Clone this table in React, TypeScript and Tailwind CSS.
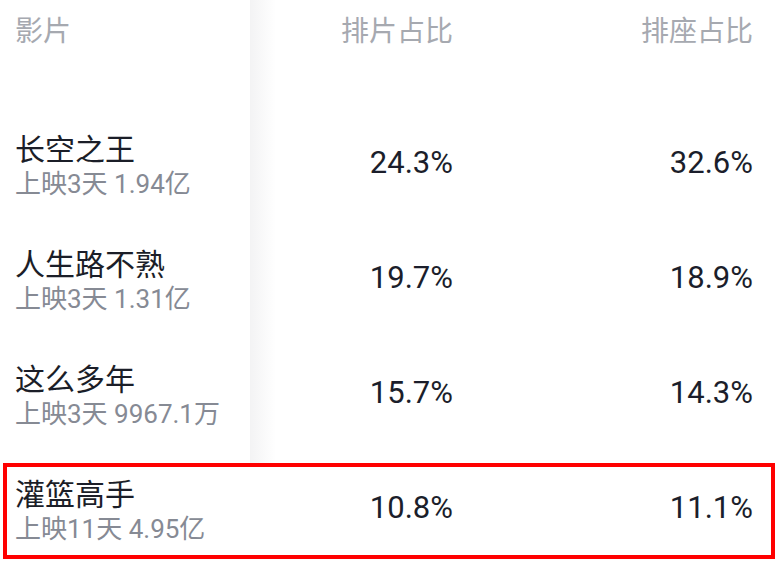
import React from "react";

interface FilmRow {
  name: string;
  info: string;
  pianRate: string;
  zuoRate: string;
  marked?: boolean;
}

const rows: FilmRow[] = [
  { name: "长空之王", info: "上映3天 1.94亿", pianRate: "24.3%", zuoRate: "32.6%" },
  { name: "人生路不熟", info: "上映3天 1.31亿", pianRate: "19.7%", zuoRate: "18.9%" },
  { name: "这么多年", info: "上映3天 9967.1万", pianRate: "15.7%", zuoRate: "14.3%" },
  { name: "灌篮高手", info: "上映11天 4.95亿", pianRate: "10.8%", zuoRate: "11.1%", marked: true },
];

// 左列固定时的阴影
const shade = "bg-[linear-gradient(to_right,#f3f3f4,#ffffff_26px)]";
const shadeTop =
  "bg-[linear-gradient(to_bottom,transparent_12px,#ffffff_12px),linear-gradient(to_right,#f3f3f4,#ffffff_26px)]";

export default function App() {
  return (
    <div
      className="w-[776px] h-[561px] overflow-hidden bg-white"
      style={{ fontFamily: "Roboto, 'Noto Sans CJK SC', sans-serif" }}
    >
      {/* 表头 */}
      <div className="flex h-[106px] text-[28px] leading-[34px] text-[#a6a9b0]">
        <div className="w-[250px] pl-[15px] pt-[15px]">影片</div>
        <div className={`w-[203px] text-right pt-[15px] ${shade}`}>排片占比</div>
        <div className="flex-1 text-right pr-[23px] pt-[15px]">排座占比</div>
      </div>

      {/* 影片列表 */}
      {rows.map(r => (
        <div key={r.name} className="relative flex h-[115px]">
          <div className="w-[250px] pl-[15px] flex flex-col justify-center pt-[4px]">
            <div className="text-[30px] leading-[36px] text-[#1b1e28]">{r.name}</div>
            <div className="text-[26px] leading-[32px] text-[#868a94]">{r.info}</div>
          </div>
          <div
            className={`w-[203px] flex items-center justify-end text-[31px] text-[#1b1e2b] ${r.marked ? shadeTop : shade}`}
          >
            {r.pianRate}
          </div>
          <div className="flex-1 flex items-center justify-end pr-[23px] text-[31px] text-[#1b1e2b]">
            {r.zuoRate}
          </div>
          {r.marked && (
            <div className="absolute left-[3px] right-[1px] top-[12px] h-[96px] border-4 border-[#ff0000]" />
          )}
        </div>
      ))}
    </div>
  );
}
